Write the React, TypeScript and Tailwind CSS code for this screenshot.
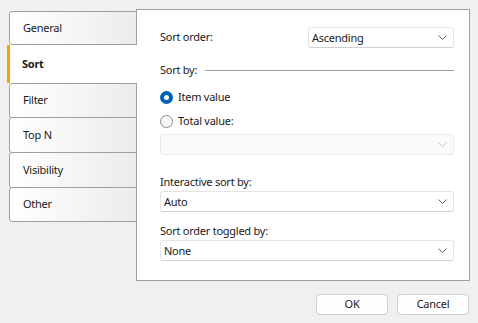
import React from "react";

const Chevron = ({ disabled }: { disabled?: boolean }) => (
  <svg width="9" height="5" viewBox="0 0 9 5" className="shrink-0">
    <path d="M0.5 0.5 L4.5 4.5 L8.5 0.5" fill="none" stroke={disabled ? "#c4c4c4" : "#5f5f5f"} strokeWidth="1" />
  </svg>
);

const Select = ({ value, disabled, className }: { value: string; disabled?: boolean; className?: string }) => (
  <div
    className={
      "h-[21px] flex items-center justify-between pl-[3px] pr-[6px] rounded-[3px] border " +
      (disabled
        ? "bg-[#fafafa] border-[#ebebeb] "
        : "bg-white border-[#e5e5e5] border-b-[#d0d0d0] ") +
      (className ?? "")
    }
  >
    <span className="leading-none">{value}</span>
    <Chevron disabled={disabled} />
  </div>
);

const Radio = ({ checked, label }: { checked?: boolean; label: string }) => (
  <div className="flex items-center gap-[5px] h-[16px]">
    {checked ? (
      <div className="w-[13px] h-[13px] rounded-full bg-[#005fb8] flex items-center justify-center">
        <div className="w-[5px] h-[5px] rounded-full bg-white" />
      </div>
    ) : (
      <div className="w-[13px] h-[13px] rounded-full border border-[#8a8a8a] bg-[#f7f7f7]" />
    )}
    <span>{label}</span>
  </div>
);

const Tab = ({ label, h, extra }: { label: string; h: string; extra?: string }) => (
  <div
    className={
      "ml-[2px] flex items-center pl-[13px] border border-[#a0a0a0] rounded-l-[3px] bg-linear-to-r from-white to-[#ececec] " +
      h +
      " " +
      (extra ?? "")
    }
  >
    {label}
  </div>
);

export default function App() {
  return (
    <div
      className="w-[478px] h-[323px] bg-[#f0f0f0] text-[11px] tracking-[-0.25px] text-[#1a1a1a] flex flex-col overflow-hidden"
      style={{ fontFamily: '"Segoe UI", "Noto Sans", sans-serif' }}
    >
      <div className="flex pt-[9px] pl-[7px]">
        <div className="w-[130px] -mr-px mt-[2px] relative z-10 flex flex-col">
          <Tab label="General" h="h-[34px]" />
          <div className="h-[38px] bg-white border-l-[3px] border-[#f7a600] flex items-center pl-[12px] font-bold">
            Sort
          </div>
          <Tab label="Filter" h="h-[35px]" />
          <Tab label="Top N" h="h-[36px]" extra="-mt-px" />
          <Tab label="Visibility" h="h-[36px]" extra="-mt-px" />
          <Tab label="Other" h="h-[35px]" extra="-mt-px" />
        </div>
        <div className="w-[334px] h-[272px] bg-white border border-[#a0a0a0] flex flex-col pl-[23px] pr-[15px] pt-[17px]">
          <div className="flex items-center justify-between h-[21px]">
            <span>Sort order:</span>
            <Select value="Ascending" className="w-[146px]" />
          </div>
          <div className="flex items-center h-[16px] mt-[14px] gap-[8px]">
            <span>Sort by:</span>
            <div className="flex-1 h-px bg-[#a0a0a0] mt-[1px]" />
          </div>
          <div className="mt-[11px]">
            <Radio checked label="Item value" />
          </div>
          <div className="mt-[8px]">
            <Radio label="Total value:" />
          </div>
          <Select value="" disabled className="mt-[5px]" />
          <div className="mt-[19px] h-[16px] flex items-center">Interactive sort by:</div>
          <Select value="Auto" className="mt-[1px]" />
          <div className="mt-[11px] h-[16px] flex items-center">Sort order toggled by:</div>
          <Select value="None" className="mt-[1px]" />
        </div>
      </div>
      <div className="flex justify-end gap-[9px] pr-[9px] mt-[13px]">
        <button className="w-[72px] h-[21px] rounded-[4px] border border-[#d0d0d0] bg-[#fdfdfd] flex items-center justify-center">
          OK
        </button>
        <button className="w-[72px] h-[21px] rounded-[4px] border border-[#d0d0d0] bg-[#fdfdfd] flex items-center justify-center">
          Cancel
        </button>
      </div>
    </div>
  );
}
